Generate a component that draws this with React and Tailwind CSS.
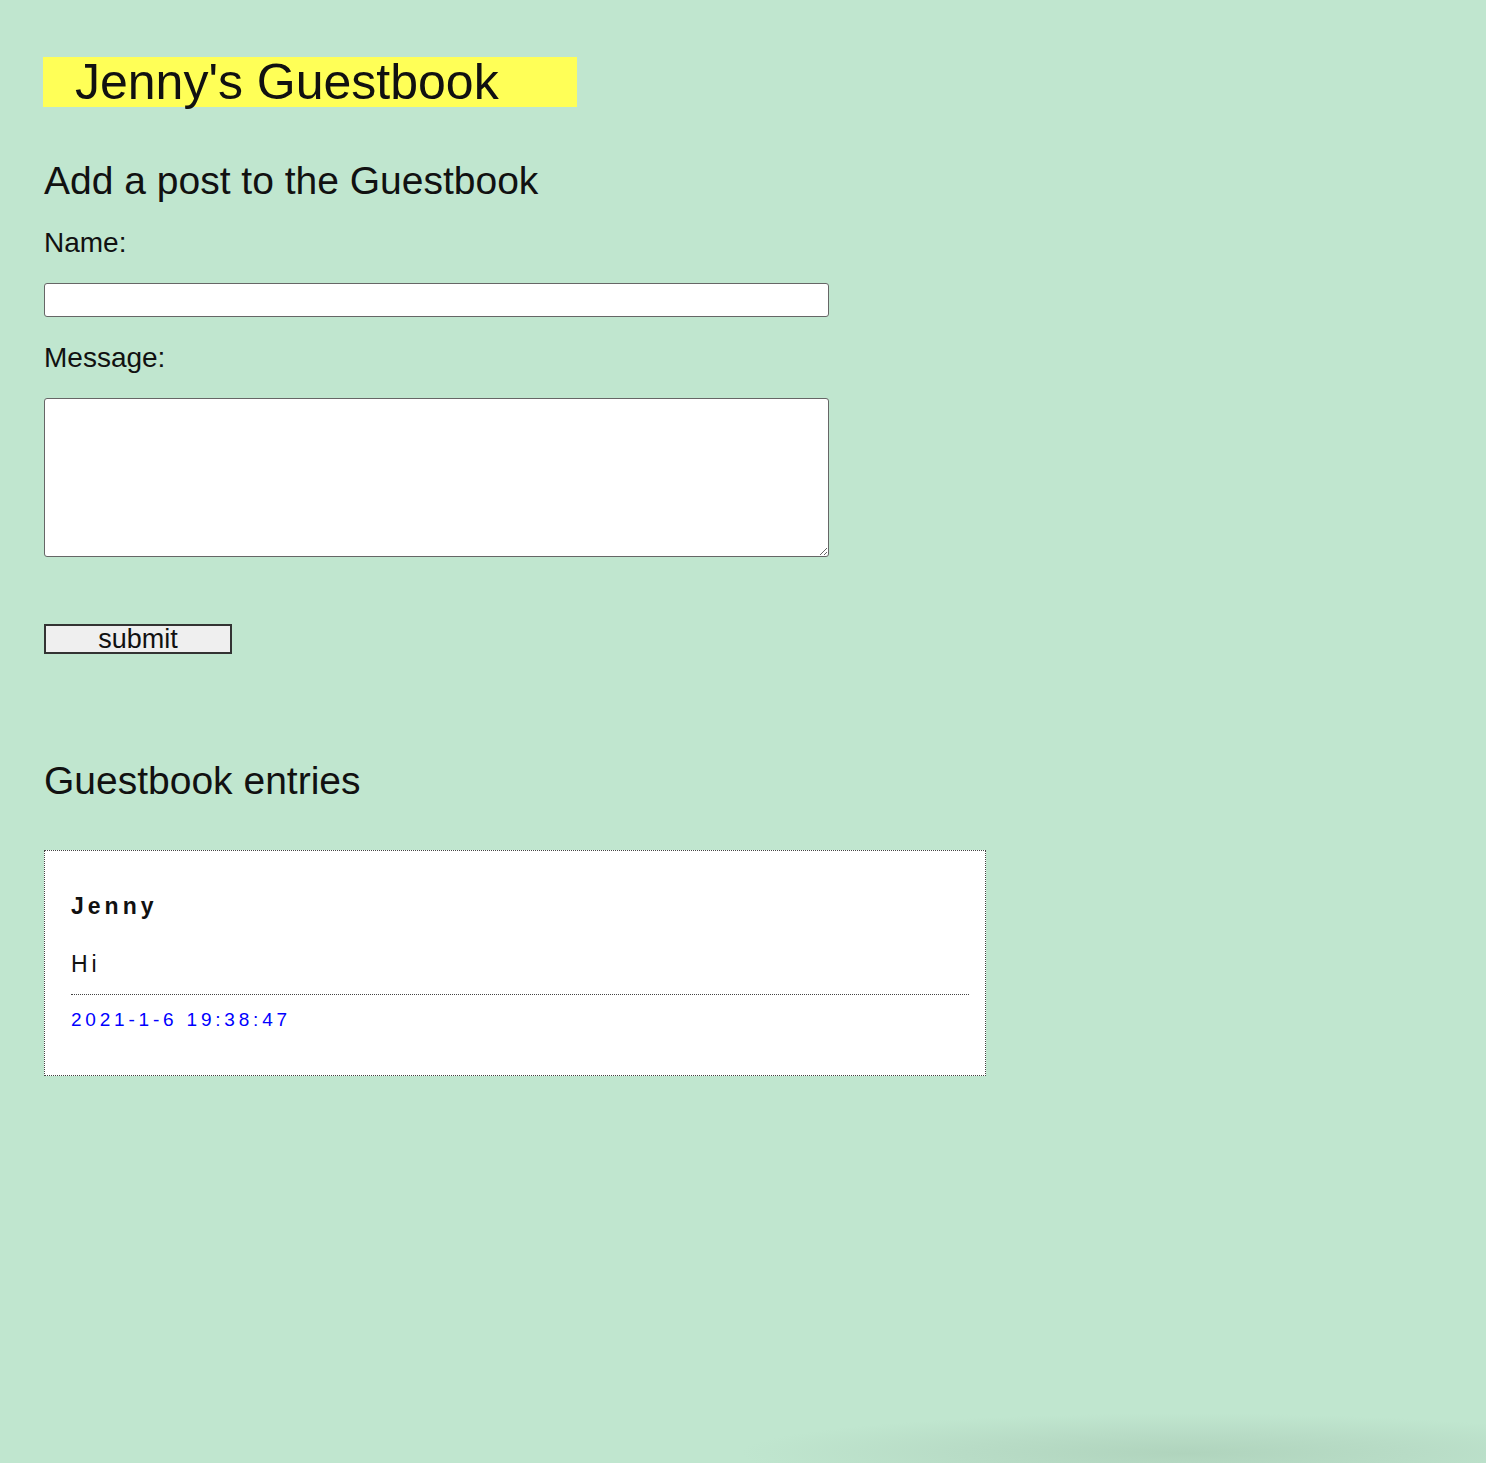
export default function App() {
  return (
    <div className="relative min-h-[1463px] overflow-hidden bg-[#c0e6cf] px-[44px] pt-[57px] font-['Liberation_Sans',Arial,sans-serif] text-[#111]">
      {/* Title */}
      <h1 className="-ml-px h-[50px] w-[534px] bg-[#ffff57] pl-[32px] text-[50px] leading-[50px] font-normal">
        Jenny's Guestbook
      </h1>

      {/* Form */}
      <h2 className="mt-[51px] text-[39px] leading-[45px] font-normal">Add a post to the Guestbook</h2>
      <form onSubmit={(e) => e.preventDefault()}>
        <label className="mt-[24px] block text-[28px] leading-[31px]">Name:</label>
        <input
          type="text"
          className="mt-[25px] block h-[34px] w-[785px] rounded-[3px] border border-[#666] bg-white"
        />
        <label className="mt-[25px] block text-[28px] leading-[31px]">Message:</label>
        <textarea className="mt-[25px] block h-[159px] w-[785px] rounded-[3px] border border-[#666] bg-white" />
        <button
          type="submit"
          className="mt-[67px] block h-[30px] w-[188px] border-2 border-[#333] bg-[#efefef] text-[27px] leading-none"
        >
          submit
        </button>
      </form>

      {/* Entries */}
      <h2 className="mt-[104px] text-[39px] leading-[45px] font-normal">Guestbook entries</h2>
      <div className="mt-[47px] w-[942px] border border-dotted border-[#444] bg-white pt-[42px] pr-[16px] pb-[44px] pl-[26px] tracking-[4px]">
        <div className="text-[23px] leading-[26px] font-bold">Jenny</div>
        <div className="mt-[32px] border-b border-dotted border-[#444] pb-[17px] text-[23px] leading-[26px]">Hi</div>
        <div className="mt-[14px] text-[19px] leading-[22px] tracking-[3.8px] text-[#0000ff]">2021-1-6 19:38:47</div>
      </div>

      {/* faint window shadow, bottom right */}
      <div className="pointer-events-none absolute -right-[150px] bottom-0 h-[80px] w-[900px] translate-y-[30px] bg-[radial-gradient(ellipse_at_center,#b0d4bd_0%,#b8dcc6_35%,transparent_70%)]" />
    </div>
  )
}
